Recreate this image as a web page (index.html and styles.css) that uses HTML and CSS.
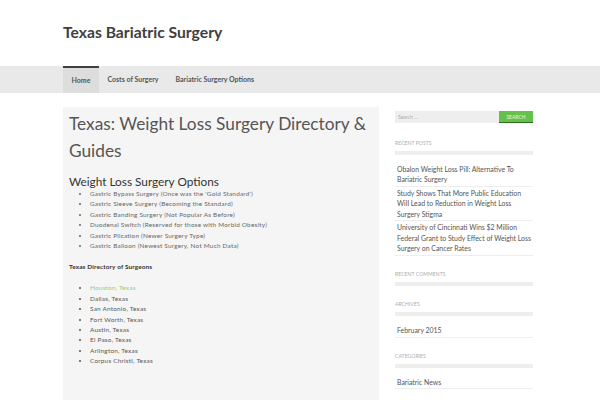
FILE: index.html
```html
<!DOCTYPE html>
<html>
<head>
	<meta charset="utf-8">
	<title>Texas Bariatric Surgery</title>
	<link rel="stylesheet" href="styles.css">
</head>
<body>
	<div class="site-header">
		<div class="wrap">
			<div class="site-title">Texas Bariatric Surgery</div>
		</div>
	</div>
	<div class="nav-bar">
		<div class="wrap nav">
			<a class="nav-item active" href="#">Home</a>
			<a class="nav-item" href="#">Costs of Surgery</a>
			<a class="nav-item" href="#">Bariatric Surgery Options</a>
		</div>
	</div>
	<div class="wrap page">
		<div class="content">
			<h1 class="entry-title">Texas: Weight Loss Surgery Directory &amp; Guides</h1>
			<h2 class="sub-title">Weight Loss Surgery Options</h2>
			<ul class="list options">
				<li>Gastric Bypass Surgery (Once was the 'Gold Standard')</li>
				<li>Gastric Sleeve Surgery (Becoming the Standard)</li>
				<li>Gastric Banding Surgery (Not Popular As Before)</li>
				<li>Duodenal Switch (Reserved for those with Morbid Obesity)</li>
				<li>Gastric Plication (Newer Surgery Type)</li>
				<li>Gastric Balloon (Newest Surgery, Not Much Data)</li>
			</ul>
			<p class="dir-title">Texas Directory of Surgeons</p>
			<ul class="list cities">
				<li><a href="#">Houston, Texas</a></li>
				<li>Dallas, Texas</li>
				<li>San Antonio, Texas</li>
				<li>Fort Worth, Texas</li>
				<li>Austin, Texas</li>
				<li>El Paso, Texas</li>
				<li>Arlington, Texas</li>
				<li>Corpus Christi, Texas</li>
			</ul>
		</div>
		<div class="sidebar">
			<div class="search">
				<input class="search-field" type="text" placeholder="Search …">
				<button class="search-btn">SEARCH</button>
			</div>
			<div class="widget">
				<div class="widget-title">RECENT POSTS</div>
				<ul class="widget-list">
					<li>Obalon Weight Loss Pill: Alternative To Bariatric Surgery</li>
					<li>Study Shows That More Public Education Will Lead to Reduction in Weight Loss Surgery Stigma</li>
					<li>University of Cincinnati Wins $2 Million Federal Grant to Study Effect of Weight Loss Surgery on Cancer Rates</li>
				</ul>
			</div>
			<div class="widget">
				<div class="widget-title">RECENT COMMENTS</div>
			</div>
			<div class="widget">
				<div class="widget-title">ARCHIVES</div>
				<ul class="widget-list">
					<li>February 2015</li>
				</ul>
			</div>
			<div class="widget">
				<div class="widget-title">CATEGORIES</div>
				<ul class="widget-list">
					<li>Bariatric News</li>
				</ul>
			</div>
		</div>
	</div>
</body>
</html>
```

FILE: styles.css
```css
body {
	margin: 0;
	background: #ffffff;
	color: #333333;
	font-family: Lato, "Open Sans", sans-serif;
}
.wrap {
	width: 470px;
	margin-left: 63px;
}
.site-header {
	height: 66px;
}
.site-title {
	padding-top: 23px;
	font-size: 15.7px;
	font-weight: bold;
	color: #404040;
}
.nav-bar {
	background: #e9e9e9;
	height: 27px;
}
.nav {
	display: flex;
	height: 27px;
}
.nav-item {
	display: block;
	padding: 0 8.5px;
	line-height: 27px;
	font-size: 7px;
	font-weight: bold;
	color: #555555;
	text-decoration: none;
}
.nav-item.active {
	background: #dddddd;
	border-top: 2px solid #404040;
	line-height: 25px;
}
.page {
	display: flex;
	gap: 16px;
	margin-top: 14px;
}
.content {
	width: 304px;
	background: #f5f5f5;
	padding: 3px 6px 40px 6px;
	flex-shrink: 0;
}
.entry-title {
	margin: 0;
	font-size: 17.3px;
	font-weight: normal;
	line-height: 27px;
	color: #555555;
}
.sub-title {
	margin: 11px 0 0 0;
	font-size: 11.8px;
	font-weight: normal;
	line-height: 14px;
	color: #333333;
}
.list {
	margin: 0;
	padding-left: 21px;
	font-size: 6.4px;
	letter-spacing: 0.22px;
	line-height: 10.4px;
	color: #555555;
}
.options {
	color: #666666;
}
.dir-title {
	margin: 11px 0 11px 0;
	font-size: 6.4px;
	letter-spacing: 0.15px;
	font-weight: bold;
	line-height: 10px;
}
.cities a {
	color: #8cd07a;
	text-decoration: none;
}
.sidebar {
	width: 138px;
}
.search {
	display: flex;
	margin-top: 4px;
	margin-bottom: 16px;
	height: 12px;
}
.search-field {
	flex: 1;
	border: none;
	background: #eeeeee;
	padding: 0 3px;
	font-size: 5px;
	font-family: Lato, sans-serif;
	height: 12px;
}
.search-field::placeholder {
	color: #aaaaaa;
}
.search-btn {
	width: 34px;
	height: 12px;
	border: none;
	border-bottom: 1px solid #2e6e1e;
	background: #66c04c;
	color: #e6f7de;
	font-size: 5px;
	font-family: Lato, sans-serif;
	padding: 0;
}
.widget {
	margin-bottom: 14px;
}
.widget-title {
	font-size: 5px;
	color: #aaaaaa;
	letter-spacing: 0.1px;
	line-height: 8px;
	padding-bottom: 4px;
	border-bottom: 4px solid #eeeeee;
}
.widget-list {
	list-style: none;
	margin: 8px 0 0 0;
	padding: 0;
}
.widget-list li {
	font-size: 6.9px;
	line-height: 10.3px;
	color: #555555;
	padding: 1px 1px 1.5px 2px;
	border-bottom: 1px solid #eeeeee;
}
```
